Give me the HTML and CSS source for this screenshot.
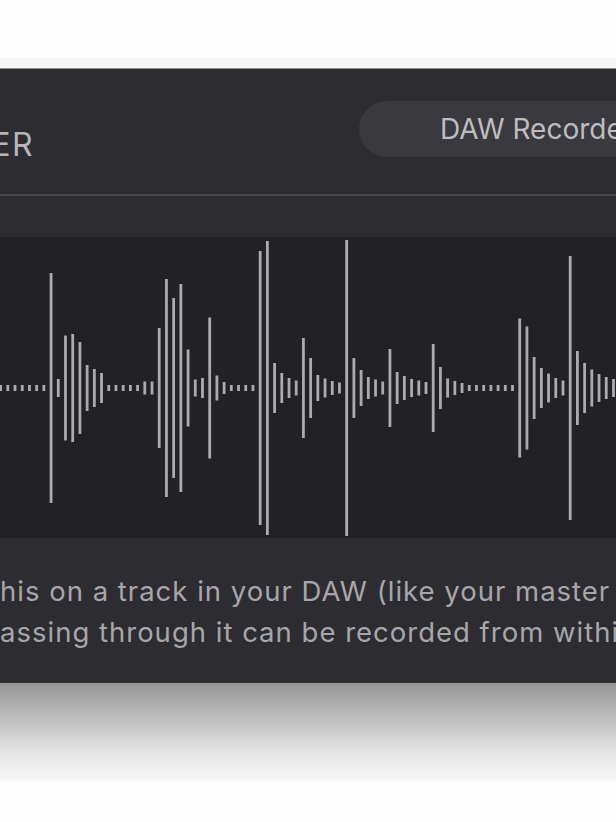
FILE: index.html
```html
<!DOCTYPE html>
<html lang="en">
<head>
    <title>DAW Recorder</title>
    <meta name="viewport" content="width=device-width, initial-scale=1.0">
    <link rel="stylesheet" href="styles.css">
</head>
<body>

    <div class="top-edge"></div>

    <div class="panel">
        <div class="header">
            <div class="title-box">
                <h1 class="title">RECORDER</h1>
            </div>
            <div class="pill">DAW Recorder</div>
        </div>

        <div class="divider"></div>

        <div class="wave">
            <svg id="waveSvg" width="616" height="301" viewBox="0 0 616 301"></svg>
        </div>

        <div class="description">
            <p class="line"><span class="cut">Place t</span>his on a track in your DAW (like your master bus) and any audio</p>
            <p class="line"><span class="cut">p</span>assing through it can be recorded from within the plugin.</p>
        </div>
    </div>

    <div class="shadow"></div>

    <script>
        // bar heights, left to right
        const heights = [
            6, 6, 6, 6, 6, 6, 6, 230, 18, 105,
            108, 92, 46, 38, 30, 6, 6, 6, 6, 6,
            13, 13, 120, 218, 180, 208, 77, 17, 20, 141,
            25, 12, 6, 6, 6, 6, 274, 294, 50, 30,
            20, 15, 100, 60, 26, 19, 14, 11, 296, 60,
            36, 22, 17, 13, 78, 32, 24, 18, 15, 12,
            88, 42, 19, 14, 10, 6, 6, 6, 6, 6,
            6, 6, 139, 123, 62, 40, 29, 20, 15, 264,
            74, 50, 37, 28, 22, 18
        ];

        const svg = document.getElementById('waveSvg');
        const centerY = 151;
        const step = 7.21;
        const barWidth = 2.8;

        heights.forEach((h, i) => {
            const rect = document.createElementNS('http://www.w3.org/2000/svg', 'rect');
            rect.setAttribute('x', (i * step + 0.6 - barWidth / 2).toFixed(2));
            rect.setAttribute('y', (centerY - h / 2).toFixed(2));
            rect.setAttribute('width', barWidth);
            rect.setAttribute('height', h);
            svg.appendChild(rect);
        });
    </script>
</body>
</html>
```

FILE: styles.css
```css
html, body {
    margin: 0;
    overflow: hidden;
    background-color: #fdfdfd;
}

body {
    padding-top: 58px;
    font-family: Inter, "Noto Sans", sans-serif;
}

.top-edge {
    height: 10px;
    background-color: #f6f6f6;
    border-bottom: 1px solid #8e8e90;
}

.panel {
    background-color: #2d2c31;
    height: 614px;
    overflow: hidden;
}

.header {
    display: flex;
    align-items: flex-start;
    height: 125px;
}

.title-box {
    width: 34px;
    flex-shrink: 0;
    display: flex;
    justify-content: flex-end;
}

.title {
    margin: 56px 0 0 0;
    font-size: 32px;
    line-height: 40px;
    font-weight: 400;
    letter-spacing: 1.5px;
    color: #b6b6b8;
    white-space: nowrap;
}

.pill {
    flex-shrink: 0;
    margin: 32px 0 0 325px;
    height: 56px;
    padding: 0 80px 0 81px;
    border-radius: 28px;
    background-color: #3a393e;
    color: #bdbdbf;
    font-size: 28px;
    display: flex;
    align-items: center;
    white-space: nowrap;
}

.divider {
    height: 2px;
    background-color: #46454a;
}

.wave {
    margin-top: 41px;
    height: 301px;
    background-color: #222125;
}

.wave svg {
    display: block;
    fill: #ababad;
}

.description {
    padding-top: 33px;
}

.line {
    margin: 0;
    font-size: 27.5px;
    line-height: 41px;
    letter-spacing: 1px;
    color: #a7a7aa;
    white-space: nowrap;
}

/* hidden start of each line, pushed past the left edge */
.cut {
    display: inline-flex;
    width: 0;
    justify-content: flex-end;
}

.shadow {
    height: 98px;
    background: linear-gradient(#959595, #bdbdbd 35%, #e4e4e4 70%, #f7f7f7);
}
```
